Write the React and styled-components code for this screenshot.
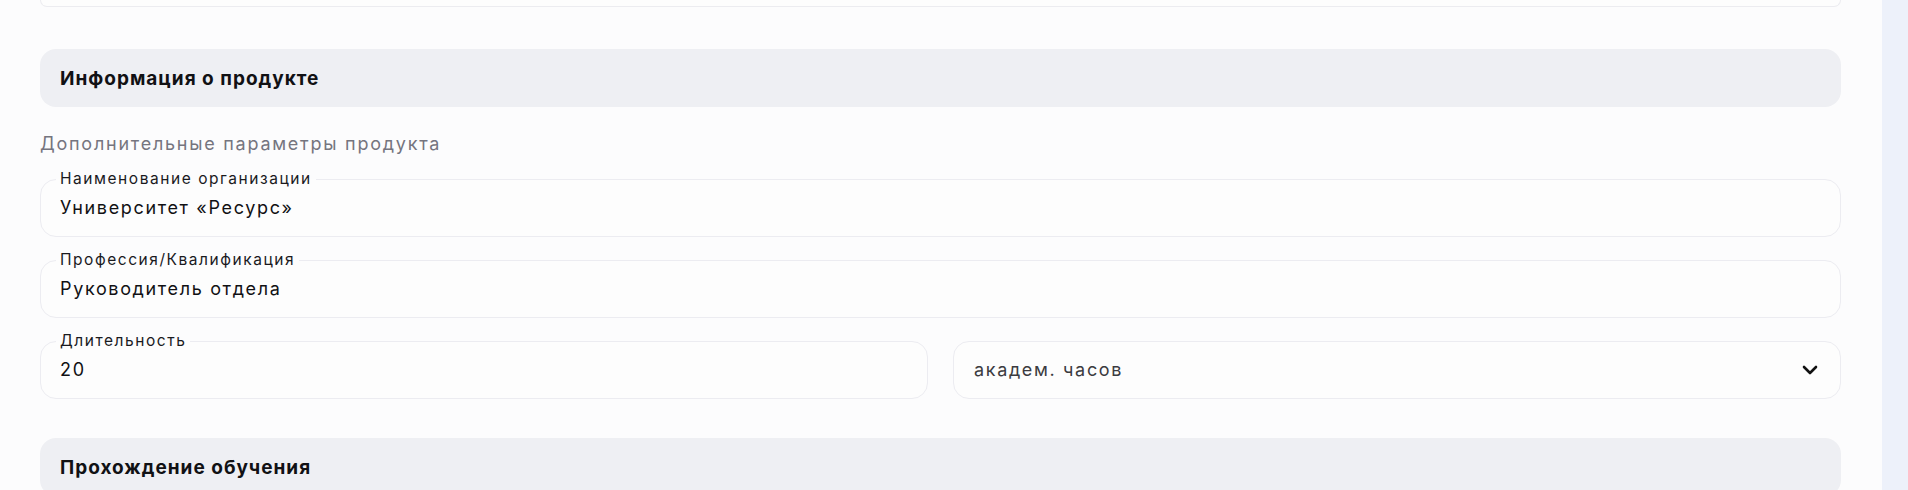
import React from "react";
import styled, { createGlobalStyle } from "styled-components";

const Global = createGlobalStyle`
  html, body { margin: 0; padding: 0; background: #fcfcfd; }
  body { font-family: Inter, "Noto Sans", sans-serif; color: #111114; }
  * { box-sizing: border-box; }
`;

const Layout = styled.div`
  display: flex;
  min-height: 490px;
  overflow: hidden;
`;

const Main = styled.main`
  flex: 1;
  padding: 0 41px 0 40px;
  display: flex;
  flex-direction: column;
`;

const Sidebar = styled.aside`
  width: 26px;
  flex-shrink: 0;
  background: #edf1fa;
`;

const CardTail = styled.div`
  height: 7px;
  border: 1px solid #ececf0;
  border-top: none;
  border-radius: 0 0 14px 14px;
  background: #fdfdfd;
`;

const SectionHeader = styled.div`
  margin-top: ${(p) => p.$mt}px;
  height: 58px;
  flex-shrink: 0;
  border-radius: 16px;
  background: #eeeff3;
  display: flex;
  align-items: center;
  padding-left: 20px;
  font-size: 19px;
  font-weight: 700;
  letter-spacing: 1px;
  color: #111114;
`;

const Body = styled.div`
  display: flex;
  flex-direction: column;
  gap: 23px;
  padding-top: 24px;
`;

const Subtitle = styled.div`
  font-size: 18px;
  line-height: 25px;
  color: #75757f;
  letter-spacing: 1.75px;
`;

const Row = styled.div`
  display: grid;
  grid-template-columns: 1fr 1fr;
  gap: 25px;
`;

const Field = styled.div`
  position: relative;
  height: 58px;
  border: 1px solid #ececf1;
  border-radius: 16px;
  background: #fdfdfd;
  display: flex;
  align-items: center;
  justify-content: space-between;
  padding: 0 22px 0 ${(p) => (p.$select ? 20 : 19)}px;
`;

const Label = styled.span`
  position: absolute;
  top: -10px;
  left: 15px;
  padding: 0 4px 0 4px;
  background: linear-gradient(to bottom, #fcfcfd 50%, #fdfdfd 50%);
  font-size: 15.5px;
  line-height: 18px;
  letter-spacing: 1.55px;
  color: #1a1a1e;
`;

const Value = styled.span`
  font-size: 18px;
  line-height: 24px;
  color: ${(p) => (p.$muted ? "#3b3b40" : "#111114")};
  letter-spacing: 1.65px;
`;

const Chevron = () => (
  <svg width="16" height="10" viewBox="0 0 16 10" fill="none">
    <path d="M2 2L8 8L14 2" stroke="#111" strokeWidth="2.6" strokeLinecap="round" strokeLinejoin="round" />
  </svg>
);

function TextField({ label, value }) {
  return (
    <Field>
      <Label>{label}</Label>
      <Value>{value}</Value>
    </Field>
  );
}

export default function App() {
  return (
    <>
      <Global />
      <Layout>
        <Main>
          <CardTail />
          <SectionHeader $mt={42}>Информация о продукте</SectionHeader>
          <Body>
            <Subtitle>Дополнительные параметры продукта</Subtitle>
            <TextField label="Наименование организации" value="Университет «Ресурс»" />
            <TextField label="Профессия/Квалификация" value="Руководитель отдела" />
            <Row>
              <TextField label="Длительность" value="20" />
              <Field $select>
                <Value $muted>академ. часов</Value>
                <Chevron />
              </Field>
            </Row>
          </Body>
          <SectionHeader $mt={39}>Прохождение обучения</SectionHeader>
        </Main>
        <Sidebar />
      </Layout>
    </>
  );
}
